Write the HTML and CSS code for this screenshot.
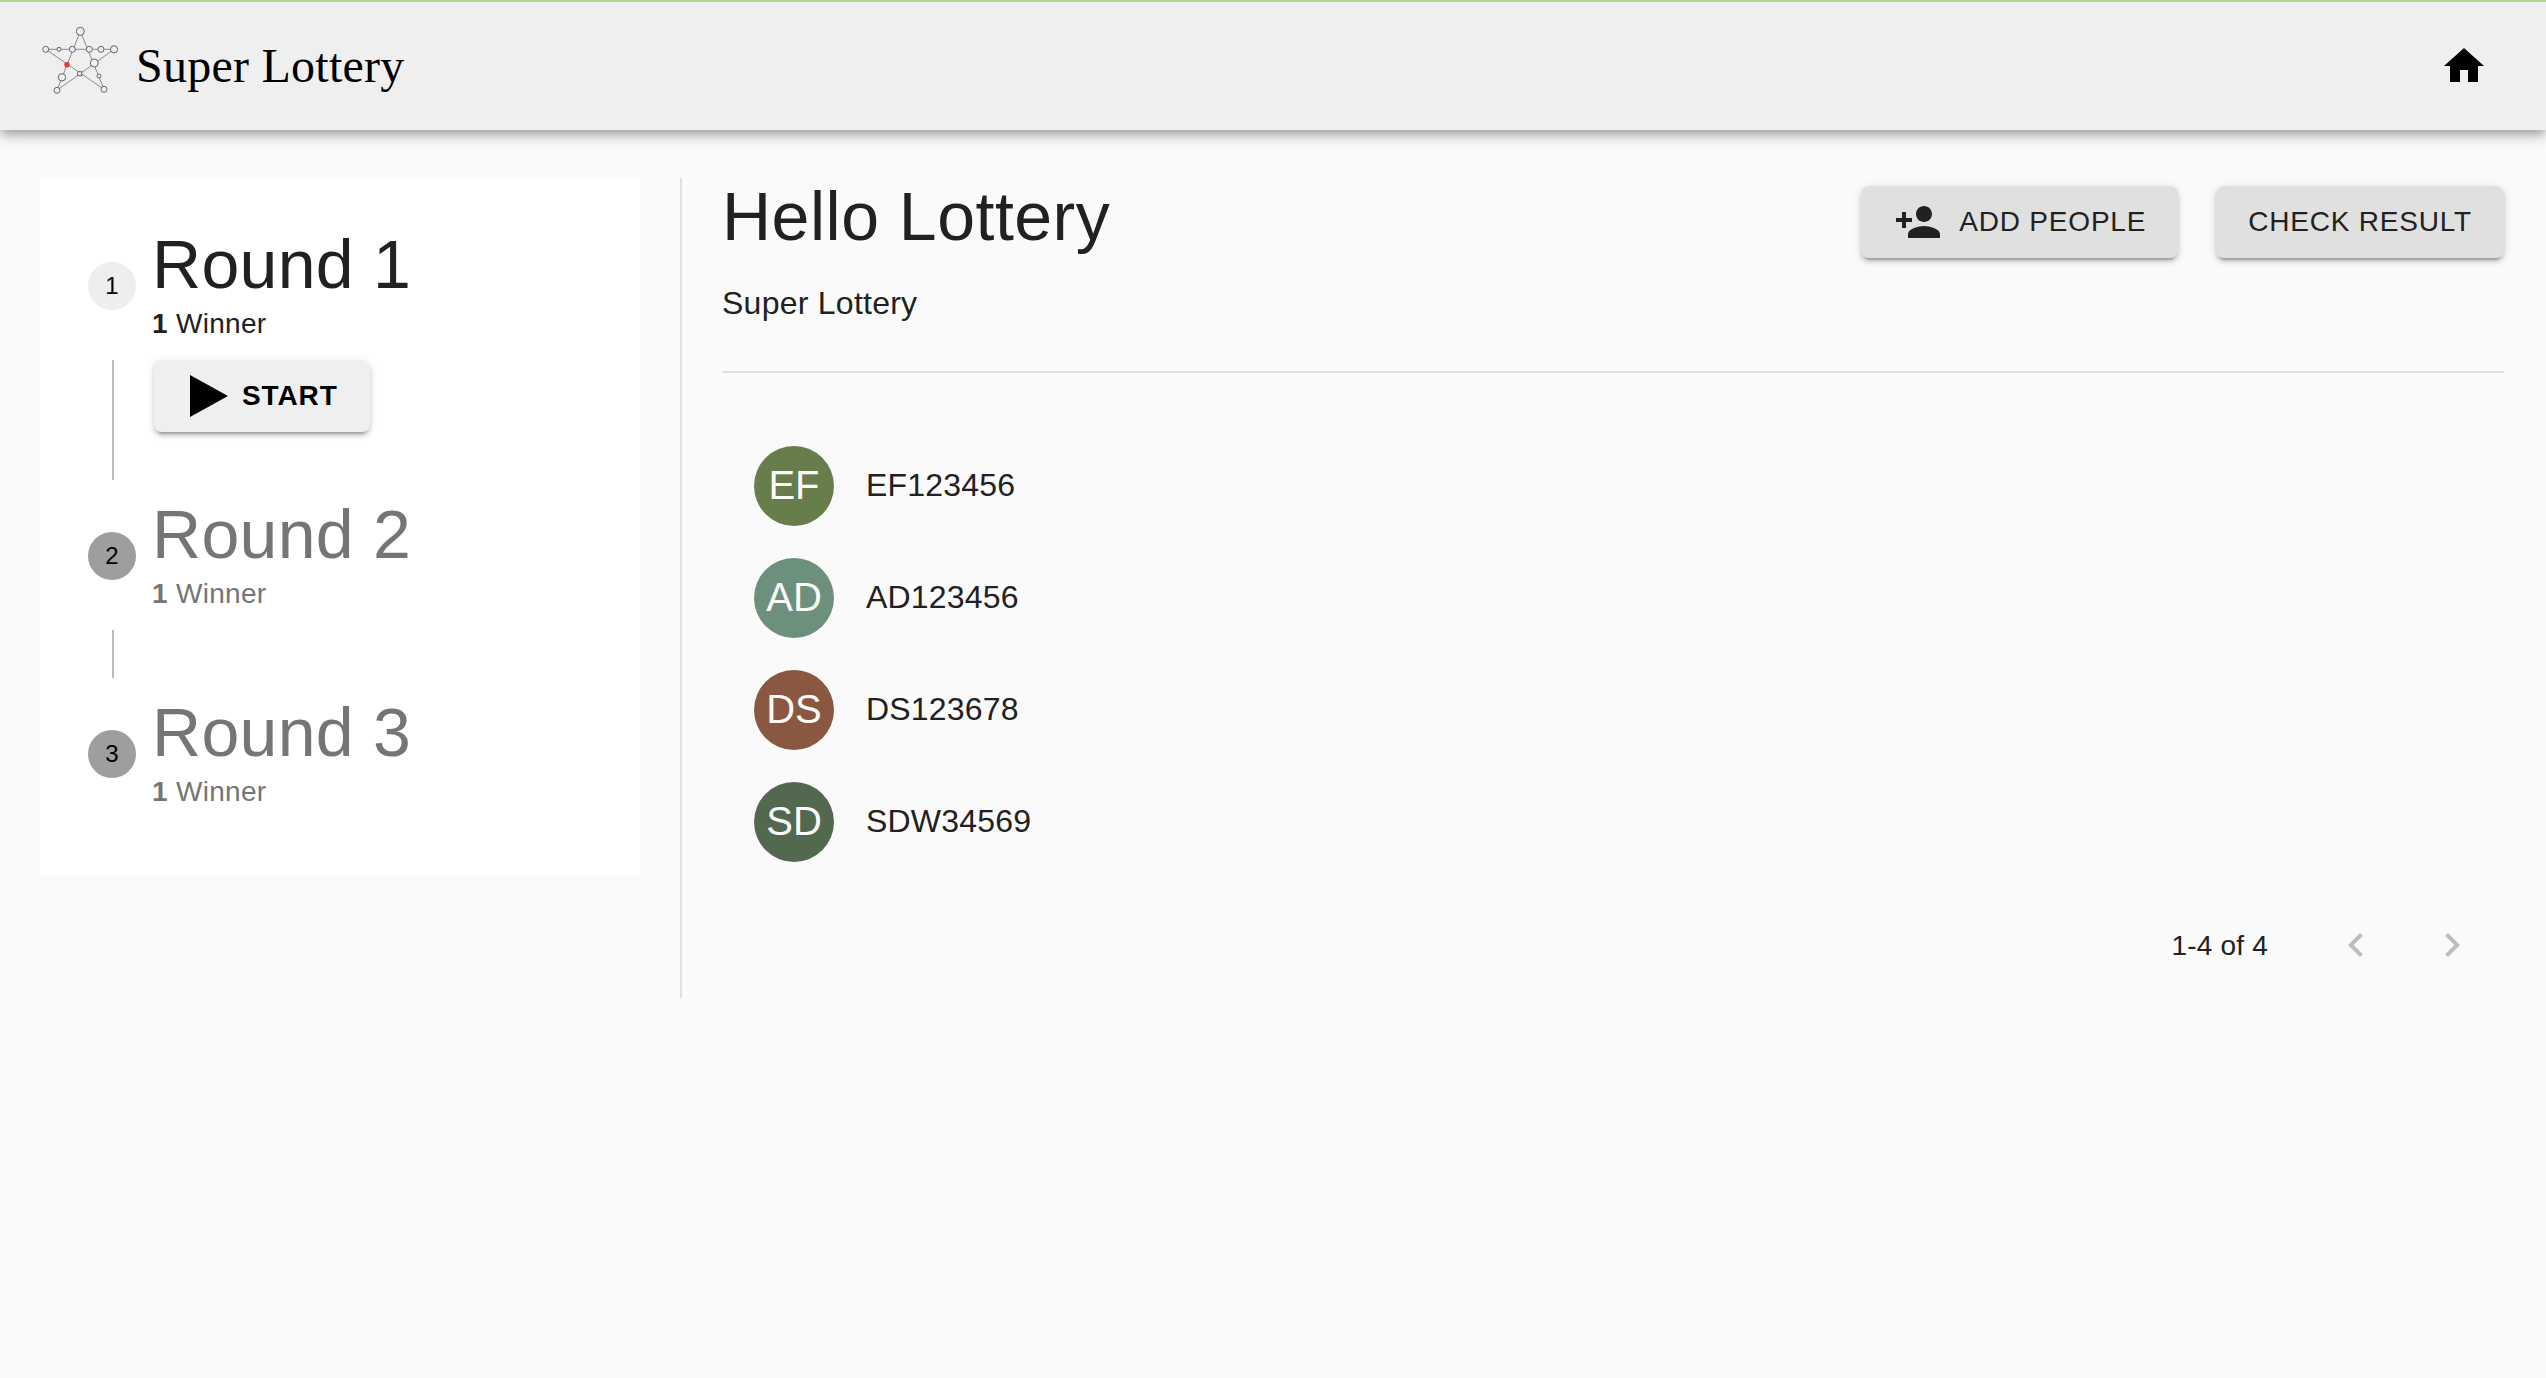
FILE: index.html
```html
<!DOCTYPE html>
<html lang="en">
<head>
<meta charset="utf-8">
<title>Super Lottery</title>
<link rel="stylesheet" href="styles.css">
</head>
<body>
<header class="appbar">
  <div class="brand">
    <svg class="logo" width="80" height="72" viewBox="40 25 80 72" aria-hidden="true">
      <g fill="none" stroke="#8a8a8a" stroke-width="1">
        <path d="M80.3 31.3 57 90.3M80.3 31.3 104 89.3M45.7 49.3H114M45.7 49.3 104 89.3M114 49.3 57 90.3"/>
      </g>
      <g fill="#efefef" stroke="#666" stroke-width="1">
        <circle cx="80.3" cy="31.3" r="4"/>
        <circle cx="45.7" cy="49.3" r="3"/>
        <circle cx="59" cy="49.3" r="2"/>
        <circle cx="72.3" cy="49.3" r="3"/>
        <circle cx="89.3" cy="49.3" r="3"/>
        <circle cx="101" cy="49.3" r="3"/>
        <circle cx="114" cy="49.3" r="3.6"/>
        <circle cx="94.3" cy="63" r="4"/>
        <circle cx="62" cy="77.3" r="3.7"/>
        <circle cx="99" cy="76" r="2"/>
        <circle cx="57" cy="90.3" r="3"/>
        <circle cx="104" cy="89.3" r="3"/>
        <rect x="77.7" y="71.7" width="4" height="4"/>
      </g>
      <circle cx="67" cy="64.7" r="2.7" fill="#e8392b"/>
    </svg>
    <span class="brand-name">Super Lottery</span>
  </div>
  <svg class="icon-48 home" viewBox="0 0 24 24" aria-hidden="true"><path d="M10 20v-6h4v6h5v-8h3L12 3 2 12h3v8z"/></svg>
</header>

<main class="layout">
  <section class="stepper">
    <div class="step-label">
      <span class="step-dot">1</span>
      <div>
        <h2 class="round">Round 1</h2>
        <p class="winners"><b>1</b> Winner</p>
      </div>
    </div>
    <div class="connector connector-open">
      <button class="btn btn-start" type="button">
        <svg class="play" width="38" height="42" viewBox="0 0 38 42" aria-hidden="true"><path d="M0 0v42l38-21z"/></svg>
        START
      </button>
    </div>
    <div class="step-label muted">
      <span class="step-dot">2</span>
      <div>
        <h2 class="round">Round 2</h2>
        <p class="winners"><b>1</b> Winner</p>
      </div>
    </div>
    <div class="connector"></div>
    <div class="step-label muted">
      <span class="step-dot">3</span>
      <div>
        <h2 class="round">Round 3</h2>
        <p class="winners"><b>1</b> Winner</p>
      </div>
    </div>
  </section>

  <section class="content">
    <div class="content-head">
      <div>
        <h1 class="title">Hello Lottery</h1>
        <p class="subtitle">Super Lottery</p>
      </div>
      <div class="actions">
        <button class="btn btn-action btn-add" type="button">
          <svg class="icon-48" viewBox="0 0 24 24" aria-hidden="true"><path d="M15 12c2.21 0 4-1.79 4-4s-1.79-4-4-4-4 1.79-4 4 1.79 4 4 4zm-9-2V7H4v3H1v2h3v3h2v-3h3v-2H6zm9 4c-2.67 0-8 1.34-8 4v2h16v-2c0-2.66-5.33-4-8-4z"/></svg>
          ADD PEOPLE
        </button>
        <button class="btn btn-action" type="button">CHECK RESULT</button>
      </div>
    </div>

    <ul class="people">
      <li class="person"><span class="avatar avatar-ef">EF</span><span class="person-id">EF123456</span></li>
      <li class="person"><span class="avatar avatar-ad">AD</span><span class="person-id">AD123456</span></li>
      <li class="person"><span class="avatar avatar-ds">DS</span><span class="person-id">DS123678</span></li>
      <li class="person"><span class="avatar avatar-sd">SD</span><span class="person-id">SDW34569</span></li>
    </ul>

    <div class="pagination">
      <span class="page-count">1-4 of 4</span>
      <span class="page-btn"><svg class="icon-48" viewBox="0 0 24 24" aria-hidden="true"><path d="M15.41 7.41 14 6l-6 6 6 6 1.41-1.41L10.83 12z"/></svg></span>
      <span class="page-btn"><svg class="icon-48" viewBox="0 0 24 24" aria-hidden="true"><path d="M10 6 8.59 7.41 13.17 12l-4.58 4.58L10 18l6-6z"/></svg></span>
    </div>
  </section>
</main>
</body>
</html>
```
FILE: styles.css
```css
* { box-sizing: border-box; }

html, body { margin: 0; height: 100%; }

body {
  background: #fafafa;
  color: #212121;
  font-family: "Liberation Sans", Arial, sans-serif;
  overflow: hidden;
}

h1, h2, p, ul { margin: 0; padding: 0; font-weight: 400; }

.appbar {
  height: 130px;
  border-top: 2px solid #b5d78c;
  background: #efefef;
  display: flex;
  align-items: center;
  justify-content: space-between;
  padding: 0 58px 0 40px;
  box-shadow: 0 4px 8px -2px rgba(0,0,0,.2), 0 8px 10px 0 rgba(0,0,0,.14), 0 2px 20px 0 rgba(0,0,0,.12);
  position: relative;
}

.brand { display: flex; align-items: center; gap: 16px; }

.logo { display: block; margin-bottom: 10px; }

.brand-name {
  font-family: "Liberation Serif", "Times New Roman", serif;
  font-size: 48px;
  line-height: 56px;
  letter-spacing: .25px;
  color: #000;
}

.icon-48 { width: 48px; height: 48px; display: block; fill: currentColor; flex: none; }

.home { color: #000; }

.layout {
  display: flex;
  align-items: flex-start;
  padding: 48px 42px 0 40px;
}

.stepper {
  width: 600px;
  flex: none;
  background: #fff;
  padding: 33px 0 47px;
}

.step-label {
  height: 150px;
  padding-left: 48px;
  display: flex;
  align-items: center;
  gap: 16px;
}

.step-dot {
  width: 48px;
  height: 48px;
  border-radius: 50%;
  background: #eee;
  color: #000;
  font-size: 24px;
  display: flex;
  align-items: center;
  justify-content: center;
  flex: none;
}

.muted { color: #757575; }
.muted .step-dot { background: #9e9e9e; }

.round { font-size: 68px; line-height: 76px; letter-spacing: .3px; }

.winners { font-size: 28px; line-height: 40px; margin-top: 2px; padding-bottom: 2px; letter-spacing: .3px; }

.connector {
  height: 48px;
  margin: -1px 0 1px 72px;
  border-left: 2px solid #bdbdbd;
}

.connector-open { height: 120px; padding-left: 40px; }

.btn {
  height: 72px;
  border: 0;
  border-radius: 8px;
  font-family: inherit;
  font-size: 28px;
  display: inline-flex;
  align-items: center;
  box-shadow: 0 6px 2px -4px rgba(0,0,0,.2), 0 4px 4px 0 rgba(0,0,0,.14), 0 2px 10px 0 rgba(0,0,0,.12);
}

.btn-start {
  background: #efefef;
  color: #000;
  font-weight: 700;
  letter-spacing: .9px;
  padding: 0 32px 0 36px;
  gap: 14px;
}

.play { display: block; fill: #000; }

.content {
  flex: 1;
  margin-left: 40px;
  border-left: 2px solid #e0e0e0;
  padding-left: 40px;
  height: 820px;
}

.content-head {
  display: flex;
  justify-content: space-between;
  align-items: flex-start;
  height: 195px;
  border-bottom: 2px solid #e0e0e0;
}

.title { font-size: 68px; line-height: 76px; letter-spacing: .5px; }

.subtitle { font-size: 32px; line-height: 48px; margin-top: 25px; letter-spacing: .25px; }

.actions { display: flex; gap: 38px; margin-top: 8px; }

.btn-action {
  background: #e0e0e0;
  color: #212121;
  letter-spacing: .8px;
  padding: 0 32px;
}

.btn-add { gap: 17px; padding-left: 33px; }

.people { list-style: none; margin-top: 57px; padding-left: 32px; }

.person {
  height: 112px;
  display: flex;
  align-items: center;
  font-size: 32px;
}

.person-id { padding-bottom: 2px; letter-spacing: .2px; }

.avatar {
  width: 80px;
  height: 80px;
  border-radius: 50%;
  margin-right: 32px;
  padding-bottom: 2px;
  color: #fafafa;
  font-size: 40px;
  display: flex;
  align-items: center;
  justify-content: center;
  flex: none;
}

.avatar-ef { background: #677d4b; }
.avatar-ad { background: #6c907b; }
.avatar-ds { background: #8a5740; }
.avatar-sd { background: #53694f; }

.pagination {
  margin-top: 43px;
  display: flex;
  align-items: center;
  justify-content: flex-end;
  height: 48px;
  padding-right: 4px;
}

.page-count { font-size: 28px; margin-right: 40px; padding-top: 2px; letter-spacing: .2px; }

.page-btn { width: 96px; display: flex; justify-content: center; color: #bdbdbd; }
```
